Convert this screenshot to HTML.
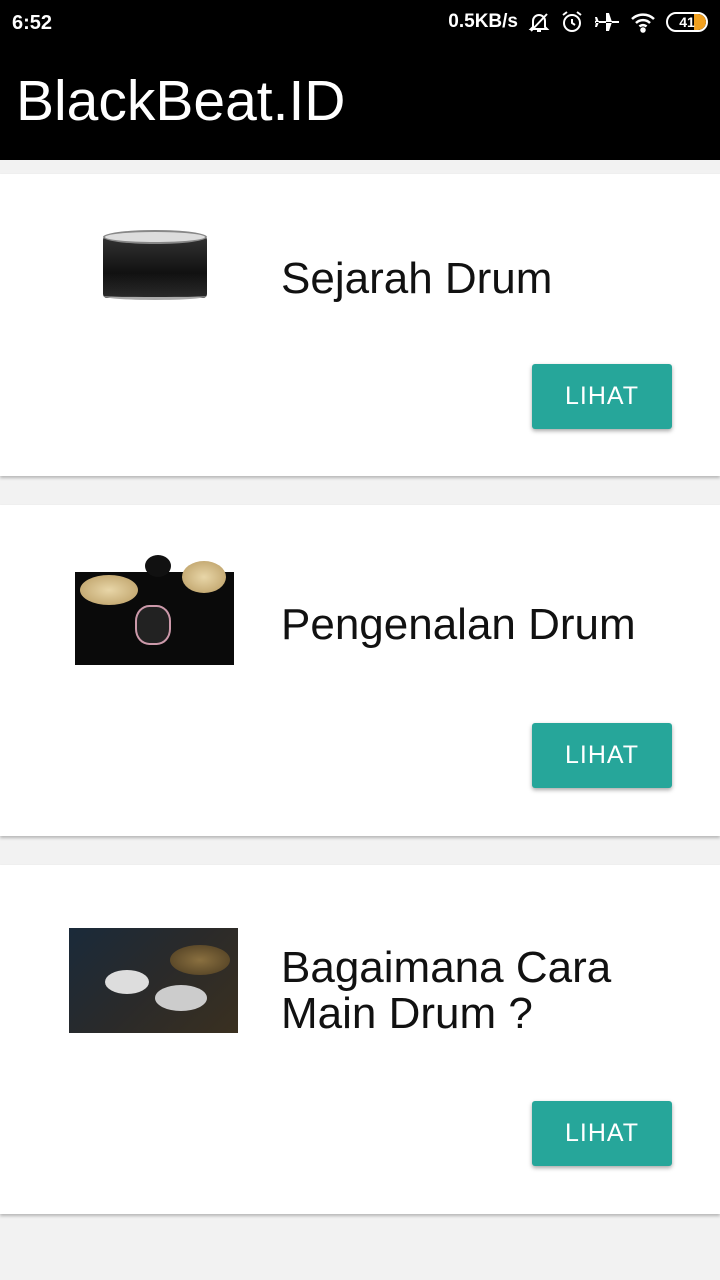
<!DOCTYPE html>
<html><head><meta charset="utf-8"><style>
*{margin:0;padding:0;box-sizing:border-box}
body{width:720px;height:1280px;background:#f2f2f2;font-family:"Liberation Sans",Roboto,sans-serif;position:relative;overflow:hidden}
.bar{position:absolute;top:0;left:0;width:720px;height:160px;background:#000;color:#fff}
.time{position:absolute;left:12px;top:12px;font-size:20px;font-weight:bold}
.stat{position:absolute;right:12px;top:10px;font-size:19px;font-weight:bold;display:flex;align-items:center;gap:10px}
.title{position:absolute;left:16px;top:68px;font-size:57px}
.card{position:absolute;left:0;width:720px;background:#fff;box-shadow:0 2px 3px rgba(0,0,0,.25)}
.txt{position:absolute;left:281px;font-size:44px;color:#111;line-height:46px}
.btn{position:absolute;left:532px;width:140px;height:65px;background:#26a69a;color:#fff;font-size:25px;text-align:center;line-height:65px;border-radius:3px;box-shadow:0 2px 4px rgba(0,0,0,.35);letter-spacing:1px}
</style></head><body>
<div class="bar">
<div class="time">6:52</div>
<div class="stat"><span>0.5KB/s</span>
<svg width="22" height="22" viewBox="0 0 22 22" fill="none" stroke="#fff" stroke-width="2"><path d="M5 16V10a6 6 0 0 1 12 0v6l2 2H3zM9 20h4M3 20L19 3"/></svg>
<svg width="24" height="24" viewBox="0 0 24 24" fill="none" stroke="#fff" stroke-width="2"><circle cx="12" cy="13" r="8"/><path d="M12 9v4l3 2M3 5l4-3M21 5l-4-3"/></svg>
<svg width="26" height="22" viewBox="0 0 26 22" fill="#fff"><path d="M1 10h24v2H1zM12 2h3l3 9h-6zM12 20h3l3-9h-6zM1 6h2l2 5H2zM1 16h2l2-5H2z"/></svg>
<svg width="26" height="22" viewBox="0 0 26 22" fill="none" stroke="#fff" stroke-width="2.5"><path d="M2 8a16 16 0 0 1 22 0M6 12a10 10 0 0 1 14 0M9.5 15.5a5 5 0 0 1 7 0"/><circle cx="13" cy="19" r="1.5" fill="#fff"/></svg>
<span style="display:inline-block;width:42px;height:20px;border:2px solid #fff;border-radius:10px;position:relative;font-size:14px;color:#fff;text-align:center;line-height:16px;overflow:hidden"><span style="position:absolute;right:0;top:0;width:12px;height:16px;background:#f0a020;border-radius:0 8px 8px 0"></span><span style="position:relative">41</span></span>
</div>
<div class="title">BlackBeat.ID</div>
</div>

<div class="card" style="top:174px;height:302px">
<div style="position:absolute;left:103px;top:54px;width:104px;height:76px">
<div style="position:absolute;top:8px;width:104px;height:62px;background:linear-gradient(#333,#111 60%,#2a2a2a);border-radius:4px"></div>
<div style="position:absolute;top:2px;width:104px;height:14px;background:#ddd;border:2px solid #888;border-radius:50%"></div>
<div style="position:absolute;top:64px;width:104px;height:8px;border-bottom:3px solid #aaa;border-radius:50%"></div>
</div>
<div class="txt" style="top:82px">Sejarah Drum</div>
<div class="btn" style="top:190px">LIHAT</div>
</div>

<div class="card" style="top:505px;height:331px">
<div style="position:absolute;left:75px;top:67px;width:159px;height:93px;background:#0a0a0a"></div>
<div style="position:absolute;left:145px;top:50px;width:26px;height:22px;background:#111;border-radius:50%"></div>
<div style="position:absolute;left:80px;top:70px;width:58px;height:30px;background:radial-gradient(#e8d6a8,#b89a60);border-radius:50%"></div>
<div style="position:absolute;left:182px;top:56px;width:44px;height:32px;background:radial-gradient(#e8d6a8,#b89a60);border-radius:50%"></div>
<div style="position:absolute;left:135px;top:100px;width:36px;height:40px;background:#222;border:2px solid #c9a;border-radius:40%"></div>
<div class="txt" style="top:97px">Pengenalan Drum</div>
<div class="btn" style="top:218px">LIHAT</div>
</div>

<div class="card" style="top:865px;height:349px">
<div style="position:absolute;left:69px;top:63px;width:169px;height:105px;background:linear-gradient(135deg,#1a2a3a,#2a2a2a 50%,#3a3020)"></div>
<div style="position:absolute;left:105px;top:105px;width:44px;height:24px;background:#ddd;border-radius:50%"></div>
<div style="position:absolute;left:155px;top:120px;width:52px;height:26px;background:#ccc;border-radius:50%"></div>
<div style="position:absolute;left:170px;top:80px;width:60px;height:30px;background:radial-gradient(#8a7040,#4a3a20);border-radius:50%"></div>
<div class="txt" style="top:80px">Bagaimana Cara<br>Main Drum ?</div>
<div class="btn" style="top:236px">LIHAT</div>
</div>
</body></html>
